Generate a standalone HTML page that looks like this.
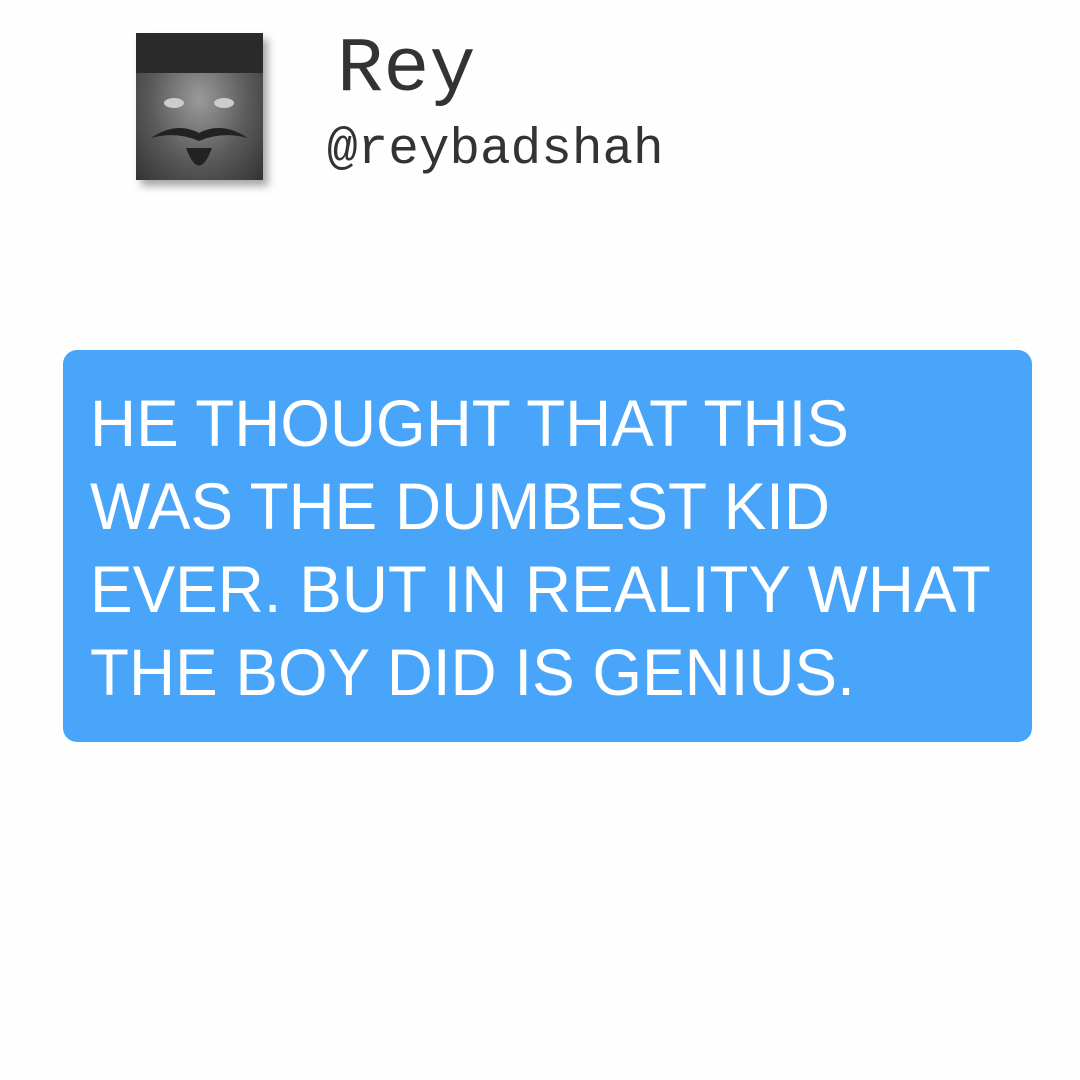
<!DOCTYPE html>
<html><head><style>
body{margin:0;width:1080px;height:1080px;background:#fefefe;position:relative;overflow:hidden}
.av{position:absolute;left:136px;top:33px;width:127px;height:147px;background:radial-gradient(ellipse at 50% 45%,#9a9a9a 0%,#5a5a5a 55%,#333 100%);box-shadow:5px 6px 8px rgba(0,0,0,.35)}
.n{position:absolute;left:337px;top:32px;font:77px "Liberation Mono",monospace;color:#333;line-height:1}
.h{position:absolute;left:327px;top:125px;font:51px "Liberation Mono",monospace;color:#333;line-height:1}
.b{position:absolute;left:63px;top:350px;width:969px;height:392px;background:#49a5f9;border-radius:14px}
.t{position:absolute;left:90px;top:382px;font:66px/83px "Liberation Sans",sans-serif;color:#fff;white-space:pre;transform:scaleX(.967);transform-origin:0 0}
</style></head><body>
<div class="av"><svg width="127" height="147"><rect x="0" y="0" width="127" height="40" fill="#2a2a2a"/><ellipse cx="38" cy="70" rx="10" ry="5" fill="#ccc"/><ellipse cx="88" cy="70" rx="10" ry="5" fill="#ccc"/><path d="M15 105 Q40 88 63 100 Q86 88 112 105 Q86 98 63 108 Q40 98 15 105Z" fill="#222"/><path d="M50 115 Q63 150 76 115Z" fill="#222"/></svg></div>
<div class="n">Rey</div>
<div class="h">@reybadshah</div>
<div class="b"></div>
<div class="t">HE THOUGHT THAT THIS
WAS THE DUMBEST KID
EVER. BUT IN REALITY WHAT
THE BOY DID IS GENIUS.</div>
</body></html>
